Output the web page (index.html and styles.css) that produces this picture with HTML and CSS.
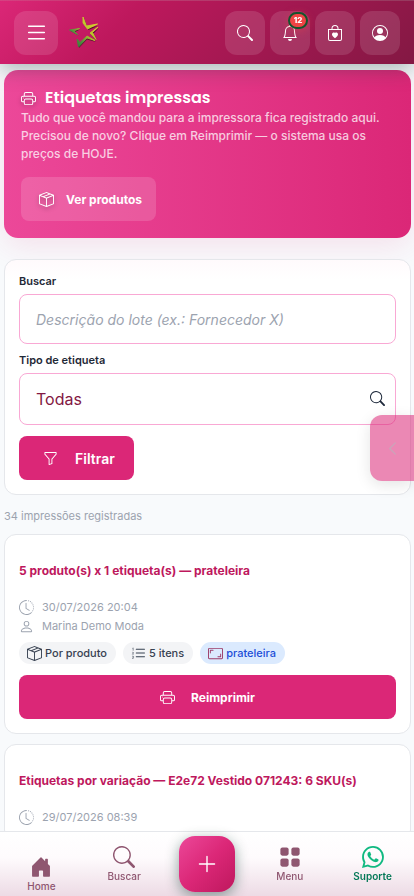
FILE: index.html
```html
<!DOCTYPE html>
<html lang="pt-BR">
<head>
<meta charset="utf-8">
<meta name="viewport" content="width=device-width, initial-scale=1">
<title>Etiquetas impressas</title>
<link rel="stylesheet" href="styles.css">
</head>
<body>
<svg class="sprite" aria-hidden="true">
  <symbol id="list" viewBox="0 0 16 16"><path d="M2.5 12a.5.5 0 0 1 .5-.5h10a.5.5 0 0 1 0 1H3a.5.5 0 0 1-.5-.5zm0-4a.5.5 0 0 1 .5-.5h10a.5.5 0 0 1 0 1H3a.5.5 0 0 1-.5-.5zm0-4a.5.5 0 0 1 .5-.5h10a.5.5 0 0 1 0 1H3a.5.5 0 0 1-.5-.5z"/></symbol>
  <symbol id="search" viewBox="0 0 16 16"><path d="M11.742 10.344a6.5 6.5 0 1 0-1.397 1.398h-.001c.03.04.062.078.098.115l3.85 3.85a1 1 0 0 0 1.415-1.414l-3.85-3.85a1.007 1.007 0 0 0-.115-.1zM12 6.5a5.5 5.5 0 1 1-11 0 5.5 5.5 0 0 1 11 0z"/></symbol>
  <symbol id="bell" viewBox="0 0 16 16"><path d="M8 16a2 2 0 0 0 2-2H6a2 2 0 0 0 2 2zM8 1.918l-.797.161A4.002 4.002 0 0 0 4 6c0 .628-.134 2.197-.459 3.742-.16.767-.376 1.566-.663 2.258h10.244c-.287-.692-.502-1.49-.663-2.258C12.134 8.197 12 6.628 12 6a4.002 4.002 0 0 0-3.203-3.92L8 1.917zM14.22 12c.223.447.481.801.78 1H1c.299-.199.557-.553.78-1C2.68 10.2 3 6.88 3 6c0-2.42 1.72-4.44 4.005-4.901a1 1 0 1 1 1.99 0A5.002 5.002 0 0 1 13 6c0 .88.32 4.2 1.22 6z"/></symbol>
  <symbol id="bag" viewBox="0 0 16 16"><path fill-rule="evenodd" d="M11.5 4v-.5a3.5 3.5 0 1 0-7 0V4H1v10a2 2 0 0 0 2 2h10a2 2 0 0 0 2-2V4h-3.5zM8 1a2.5 2.5 0 0 1 2.5 2.5V4h-5v-.5A2.5 2.5 0 0 1 8 1zM2 5h12v9a1 1 0 0 1-1 1H3a1 1 0 0 1-1-1V5z"/><path d="M8 7.993c1.664-1.711 5.825 1.283 0 5.132-5.825-3.85-1.664-6.843 0-5.132z"/></symbol>
  <symbol id="account" viewBox="0 0 16 16"><path d="M11 6a3 3 0 1 1-6 0 3 3 0 0 1 6 0z"/><path fill-rule="evenodd" d="M0 8a8 8 0 1 1 16 0A8 8 0 0 1 0 8zm8-7a7 7 0 0 0-5.468 11.37C3.242 11.226 4.805 10 8 10s4.757 1.225 5.468 2.37A7 7 0 0 0 8 1z"/></symbol>
  <symbol id="printer" viewBox="0 0 16 16"><path d="M2.5 8a.5.5 0 1 0 0-1 .5.5 0 0 0 0 1z"/><path d="M5 1a2 2 0 0 0-2 2v2H2a2 2 0 0 0-2 2v3a2 2 0 0 0 2 2h1v1a2 2 0 0 0 2 2h6a2 2 0 0 0 2-2v-1h1a2 2 0 0 0 2-2V7a2 2 0 0 0-2-2h-1V3a2 2 0 0 0-2-2H5zM4 3a1 1 0 0 1 1-1h6a1 1 0 0 1 1 1v2H4V3zm1 5a2 2 0 0 0-2 2v1H2a1 1 0 0 1-1-1V7a1 1 0 0 1 1-1h12a1 1 0 0 1 1 1v3a1 1 0 0 1-1 1h-1v-1a2 2 0 0 0-2-2H5zm7 2v3a1 1 0 0 1-1 1H5a1 1 0 0 1-1-1v-3a1 1 0 0 1 1-1h6a1 1 0 0 1 1 1z"/></symbol>
  <symbol id="box" viewBox="0 0 16 16"><path d="M8.186 1.113a.5.5 0 0 0-.372 0L1.846 3.5l2.404.961L10.404 2l-2.218-.887zm3.564 1.426L5.596 5 8 5.961 14.154 3.5l-2.404-.961zm3.25 1.7-6.5 2.6v7.922l6.5-2.6V4.24zM7.5 14.762V6.838L1 4.239v7.923l6.5 2.6zM7.443.184a1.5 1.5 0 0 1 1.114 0l7.129 2.852A.5.5 0 0 1 16 3.5v8.662a1 1 0 0 1-.629.928l-7.185 2.874a.5.5 0 0 1-.372 0L.63 13.09a1 1 0 0 1-.63-.928V3.5a.5.5 0 0 1 .314-.464L7.443.184z"/></symbol>
  <symbol id="funnel" viewBox="0 0 16 16"><path d="M1.5 1.5A.5.5 0 0 1 2 1h12a.5.5 0 0 1 .5.5v2a.5.5 0 0 1-.128.334L10 8.692V13.5a.5.5 0 0 1-.342.474l-3 1A.5.5 0 0 1 6 14.5V8.692L1.628 3.834A.5.5 0 0 1 1.5 3.5v-2zm1 .5v1.308l4.372 4.858A.5.5 0 0 1 7 8.5v5.306l2-.666V8.5a.5.5 0 0 1 .128-.334L13.5 3.308V2h-11z"/></symbol>
  <symbol id="clock" viewBox="0 0 16 16"><path d="M8.515 1.019A7 7 0 0 0 8 1V0a8 8 0 0 1 .589.022l-.074.997zm2.004.45a7.003 7.003 0 0 0-.985-.299l.219-.976c.383.086.76.2 1.126.342l-.36.933zm1.37.71a7.01 7.01 0 0 0-.439-.27l.493-.87a8.025 8.025 0 0 1 .979.654l-.615.789a6.996 6.996 0 0 0-.418-.302zm1.834 1.79a6.99 6.99 0 0 0-.653-.796l.724-.69c.27.285.52.59.747.91l-.818.576zm.744 1.352a7.08 7.08 0 0 0-.214-.468l.893-.45a7.976 7.976 0 0 1 .45 1.088l-.95.313a7.023 7.023 0 0 0-.179-.483zm.53 2.507a6.991 6.991 0 0 0-.1-1.025l.985-.17c.067.386.106.778.116 1.17l-1 .025zm-.131 1.538c.033-.17.06-.339.081-.51l.993.123a7.957 7.957 0 0 1-.23 1.155l-.964-.267c.046-.165.086-.332.12-.501zm-.952 2.379c.184-.29.346-.594.486-.908l.914.405c-.16.36-.345.706-.555 1.038l-.845-.535zm-.964 1.205c.122-.122.239-.248.35-.378l.758.653a8.073 8.073 0 0 1-.401.432l-.707-.707z"/><path d="M8 1a7 7 0 1 0 4.95 11.95l.707.707A8.001 8.001 0 1 1 8 0v1z"/><path d="M7.5 3a.5.5 0 0 1 .5.5v5.21l3.248 1.856a.5.5 0 0 1-.496.868l-3.5-2A.5.5 0 0 1 7 9V3.5a.5.5 0 0 1 .5-.5z"/></symbol>
  <symbol id="person" viewBox="0 0 16 16"><path d="M8 8a3 3 0 1 0 0-6 3 3 0 0 0 0 6Zm2-3a2 2 0 1 1-4 0 2 2 0 0 1 4 0Zm4 8c0 1-1 1-1 1H3s-1 0-1-1 1-4 6-4 6 3 6 4Zm-1-.004c-.001-.246-.154-.986-.832-1.664C11.516 10.68 10.289 10 8 10c-2.29 0-3.516.68-4.168 1.332-.678.678-.83 1.418-.832 1.664h10Z"/></symbol>
  <symbol id="steps" viewBox="0 0 16 16"><path d="M5 11.5a.5.5 0 0 1 .5-.5h9a.5.5 0 0 1 0 1h-9a.5.5 0 0 1-.5-.5zm0-4a.5.5 0 0 1 .5-.5h9a.5.5 0 0 1 0 1h-9a.5.5 0 0 1-.5-.5zm0-4a.5.5 0 0 1 .5-.5h9a.5.5 0 0 1 0 1h-9a.5.5 0 0 1-.5-.5z"/><path fill="none" stroke="currentColor" stroke-width=".6" d="M1.6 2.5 2.3 2v3M1.3 6.9q.9-.8 1.4.1 0 .6-1.3 1.7h1.5M1.3 10.9q1.3-.5 1.4.3-.1.7-.9.7 1 0 1 .8-.1 1-1.6.5"/></symbol>
  <symbol id="ratio" viewBox="0 0 16 16"><path d="M0 3.5A1.5 1.5 0 0 1 1.5 2h13A1.5 1.5 0 0 1 16 3.5v9a1.5 1.5 0 0 1-1.5 1.5h-13A1.5 1.5 0 0 1 0 12.5v-9zM1.5 3a.5.5 0 0 0-.5.5v9a.5.5 0 0 0 .5.5h13a.5.5 0 0 0 .5-.5v-9a.5.5 0 0 0-.5-.5h-13z"/><path d="M2 4.5a.5.5 0 0 1 .5-.5h3a.5.5 0 0 1 0 1H3v2.5a.5.5 0 0 1-1 0v-3zm12 7a.5.5 0 0 1-.5.5h-3a.5.5 0 0 1 0-1H13V8.5a.5.5 0 0 1 1 0v3z"/></symbol>
  <symbol id="house" viewBox="0 0 16 16"><path d="M6.5 14.5v-3.505c0-.245.25-.495.5-.495h2c.25 0 .5.25.5.5v3.5a.5.5 0 0 0 .5.5h4a.5.5 0 0 0 .5-.5v-7a.5.5 0 0 0-.146-.354L13 5.793V2.5a.5.5 0 0 0-.5-.5h-1a.5.5 0 0 0-.5.5v1.293L8.354 1.146a.5.5 0 0 0-.708 0l-6 6A.5.5 0 0 0 1.5 7.5v7a.5.5 0 0 0 .5.5h4a.5.5 0 0 0 .5-.5Z"/></symbol>
  <symbol id="grid" viewBox="0 0 16 16"><rect x="1" y="1" width="6" height="6" rx="1.5"/><rect x="9" y="1" width="6" height="6" rx="1.5"/><rect x="1" y="9" width="6" height="6" rx="1.5"/><rect x="9" y="9" width="6" height="6" rx="1.5"/></symbol>
  <symbol id="plus" viewBox="0 0 16 16"><path d="M8 2a.5.5 0 0 1 .5.5v5h5a.5.5 0 0 1 0 1h-5v5a.5.5 0 0 1-1 0v-5h-5a.5.5 0 0 1 0-1h5v-5A.5.5 0 0 1 8 2z"/></symbol>
  <symbol id="chevron" viewBox="0 0 16 16"><path fill="none" stroke="currentColor" stroke-width="1.3" stroke-linecap="round" stroke-linejoin="round" d="M11 2 5 8l6 6"/></symbol>
  <symbol id="whatsapp" viewBox="0 0 16 16"><path d="M13.601 2.326A7.854 7.854 0 0 0 7.994 0C3.627 0 .068 3.558.064 7.926c0 1.399.366 2.76 1.057 3.965L0 16l4.204-1.102a7.933 7.933 0 0 0 3.79.965h.004c4.368 0 7.926-3.558 7.93-7.93A7.898 7.898 0 0 0 13.6 2.326zM7.994 14.521a6.573 6.573 0 0 1-3.356-.92l-.24-.144-2.494.654.666-2.433-.156-.251a6.56 6.56 0 0 1-1.007-3.505c0-3.626 2.957-6.584 6.591-6.584a6.56 6.56 0 0 1 4.66 1.931 6.557 6.557 0 0 1 1.928 4.66c-.004 3.639-2.961 6.592-6.592 6.592zm3.615-4.934c-.197-.099-1.17-.578-1.353-.646-.182-.065-.315-.099-.445.099-.133.197-.513.646-.627.775-.114.133-.232.148-.43.05-.197-.1-.836-.308-1.592-.985-.59-.525-.985-1.175-1.103-1.372-.114-.198-.011-.304.088-.403.087-.088.197-.232.296-.346.1-.114.133-.198.198-.33.065-.134.034-.248-.015-.347-.05-.099-.445-1.076-.612-1.47-.16-.389-.323-.335-.445-.34-.114-.007-.247-.007-.38-.007a.729.729 0 0 0-.529.247c-.182.198-.691.677-.691 1.654 0 .977.71 1.916.81 2.049.098.133 1.394 2.132 3.383 2.992.47.205.84.326 1.129.418.475.152.904.129 1.246.08.38-.058 1.171-.48 1.338-.943.164-.464.164-.86.114-.943-.049-.084-.182-.133-.38-.232z"/></symbol>
</svg>

<header class="topbar">
  <button class="tool tool-menu" type="button" aria-label="Abrir menu"><svg class="icon icon-lg"><use href="#list"/></svg></button>
  <a class="logo" href="#" aria-label="Início">
    <svg class="logo-mark" viewBox="0 0 32 34">
      <defs><linearGradient id="leaf" x1="1" y1="0" x2="0" y2="1"><stop offset="0" stop-color="#e8dc2a"/><stop offset=".45" stop-color="#b4c52c"/><stop offset=".7" stop-color="#4c8f3e"/><stop offset="1" stop-color="#2b6a35"/></linearGradient></defs>
      <g class="logo-shade"><path d="M15 2 18.5 11.500 29 10 19.500 14 16 9zM30 12 24 18 27 24.500 21.500 18zM27 26 18 23.500 10 32 9 25.500 11.500 28 18.500 21zM1.500 15 11 13.500 6 16 9.500 19.500z"/></g>
      <path fill="url(#leaf)" stroke="url(#leaf)" stroke-width=".9" stroke-linejoin="round" d="M14 1 17.500 10 28.500 8 18.500 13 14 7zM29 11 23.500 16.500 27 23.500 21 17zM26 24.500 18 22 9.500 31 8 23 11 26.500 18 20zM.5 14 10.500 12.500 5 15 8.500 18.500z"/>
    </svg>
  </a>
  <div class="tools">
    <button class="tool" type="button" aria-label="Pesquisar"><svg class="icon icon-md"><use href="#search"/></svg></button>
    <button class="tool" type="button" aria-label="Notificações"><svg class="icon icon-md"><use href="#bell"/></svg><span class="badge">12</span></button>
    <button class="tool" type="button" aria-label="Sacola"><svg class="icon icon-md"><use href="#bag"/></svg></button>
    <button class="tool" type="button" aria-label="Conta"><svg class="icon icon-md"><use href="#account"/></svg></button>
  </div>
</header>

<main class="page">
  <section class="hero">
    <h1 class="hero-title"><svg class="icon icon-shadow"><use href="#printer"/></svg>Etiquetas impressas</h1>
    <p class="hero-text">Tudo que você mandou para a impressora fica registrado aqui. Precisou de novo? Clique em Reimprimir — o sistema usa os preços de HOJE.</p>
    <a class="btn btn-glass" href="#"><svg class="icon icon-shadow"><use href="#box"/></svg>Ver produtos</a>
  </section>

  <form class="card filter">
    <label class="label" for="q">Buscar</label>
    <input class="field" id="q" type="text" placeholder="Descrição do lote (ex.: Fornecedor X)">
    <label class="label" for="kind">Tipo de etiqueta</label>
    <div class="select-wrap">
      <select class="field field-select" id="kind"><option>Todas</option></select>
      <svg class="icon select-icon"><use href="#search"/></svg>
    </div>
    <button class="btn btn-filter" type="button"><svg class="icon"><use href="#funnel"/></svg>Filtrar</button>
  </form>

  <p class="count">34 impressões registradas</p>

  <article class="card batch">
    <h2 class="batch-title">5 produto(s) x 1 etiqueta(s) — prateleira</h2>
    <p class="meta"><svg class="icon"><use href="#clock"/></svg>30/07/2026 20:04</p>
    <p class="meta"><svg class="icon"><use href="#person"/></svg>Marina Demo Moda</p>
    <div class="chips">
      <span class="chip"><svg class="icon"><use href="#box"/></svg>Por produto</span>
      <span class="chip"><svg class="icon"><use href="#steps"/></svg>5 itens</span>
      <span class="chip chip-blue"><svg class="icon"><use href="#ratio"/></svg>prateleira</span>
    </div>
    <button class="btn btn-print" type="button"><svg class="icon"><use href="#printer"/></svg>Reimprimir</button>
  </article>

  <article class="card batch">
    <h2 class="batch-title">Etiquetas por variação — E2e72 Vestido 071243: 6 SKU(s)</h2>
    <p class="meta"><svg class="icon"><use href="#clock"/></svg>29/07/2026 08:39</p>
  </article>
</main>

<button class="drawer" type="button" aria-label="Abrir painel"><svg class="icon"><use href="#chevron"/></svg></button>

<nav class="bottombar">
  <a class="tab tab-home" href="#"><svg class="icon"><use href="#house"/></svg>Home</a>
  <a class="tab" href="#"><svg class="icon"><use href="#search"/></svg>Buscar</a>
  <div class="add-slot"><button class="add" type="button" aria-label="Adicionar"><svg class="icon"><use href="#plus"/></svg></button></div>
  <a class="tab" href="#"><svg class="icon"><use href="#grid"/></svg>Menu</a>
  <a class="tab tab-help" href="#"><svg class="icon"><use href="#whatsapp"/></svg>Suporte</a>
</nav>
</body>
</html>
```
FILE: styles.css
```css
* { box-sizing: border-box; }

body {
  margin: 0;
  background: #f8fafc;
  color: #1e293b;
  font-family: Inter, "Liberation Sans", sans-serif;
  font-size: 14px;
}

h1, h2, p { margin: 0; }
a { text-decoration: none; color: inherit; }
button, input, select { font-family: inherit; }
button { border: 0; cursor: pointer; }

.sprite { display: block; width: 0; height: 0; position: absolute; }
.icon { width: 15px; height: 15px; fill: currentColor; flex: none; }
.icon-md { width: 16px; height: 16px; }
.icon-lg { width: 25px; height: 25px; }
.icon-shadow { filter: drop-shadow(0 2px 2px rgba(0, 0, 0, .3)); }

.topbar {
  position: fixed;
  z-index: 2;
  top: 0;
  left: 0;
  right: 0;
  height: 64px;
  padding: 0 14px;
  display: flex;
  align-items: center;
  background: linear-gradient(135deg, #db2777 0%, #be185d 30%, #831843 100%);
  border-top: 1px solid rgba(255, 255, 255, .15);
  box-shadow: 0 4px 20px rgba(6, 60, 45, .35);
}
.tool {
  position: relative;
  width: 40px;
  height: 44px;
  padding: 0;
  display: grid;
  place-items: center;
  border-radius: 12px;
  color: #fff;
  background: rgba(255, 255, 255, .12);
}
.tool-menu { width: 44px; }
.logo { margin-left: 11px; }
.logo-mark { display: block; width: 32px; height: 34px; }
.logo-shade { fill: rgba(50, 20, 30, .75); }
.tools { margin-left: auto; display: flex; gap: 5px; }
.badge {
  position: absolute;
  top: 1px;
  right: 2px;
  width: 20px;
  height: 17px;
  border: 2px solid #14532d;
  border-radius: 9px;
  background: #ef4444;
  font-size: 8px;
  font-weight: 800;
  line-height: 13px;
  text-align: center;
  box-shadow: 0 2px 8px rgba(239, 68, 68, .4);
}

.page { padding: 70px 3px 0 4px; }

.hero {
  padding: 17px;
  margin-bottom: 21px;
  border-radius: 14px;
  color: #fff;
  background: linear-gradient(90deg, #ec4899, #db2777);
  box-shadow: 0 8px 30px rgba(219, 39, 119, .12);
}
.hero-title {
  display: flex;
  align-items: center;
  gap: 9px;
  font-family: Poppins, Inter, sans-serif;
  font-size: 16px;
  font-weight: 600;
  line-height: 22px;
}
.hero-text {
  margin-bottom: 14px;
  font-size: 12px;
  line-height: 18px;
  font-weight: 500;
  color: rgba(255, 255, 255, .75);
}

.btn {
  display: inline-flex;
  align-items: center;
  justify-content: center;
  height: 44px;
  border-radius: 8px;
  color: #fff;
  background: #db2777;
  font-size: 12px;
  font-weight: 700;
}
.btn-glass { gap: 12px; padding: 0 14px 0 18px; background: rgba(255, 255, 255, .15); }
.btn-filter { align-self: flex-start; gap: 17px; padding: 0 19px 0 24px; font-size: 14px; font-weight: 600; }
.btn-print { width: 100%; gap: 16px; }

.card {
  border: 1px solid #e5e7eb;
  border-radius: 12px;
  background: #fff;
}
.filter {
  display: flex;
  flex-direction: column;
  padding: 14px;
  background: linear-gradient(180deg, #fffafc, #fff 20px);
}
.label {
  margin-bottom: 6px;
  color: #1f2937;
  font-size: 11px;
  font-weight: 600;
  line-height: 14px;
}
.field {
  width: 100%;
  height: 50px;
  margin-bottom: 9px;
  padding: 0 16px;
  border: 1px solid #f9a8d4;
  border-radius: 8px;
  background: #fff;
  color: #831843;
  font-size: 14px;
}
.field::placeholder { color: #9ca3af; font-style: italic; opacity: 1; }
.select-wrap { position: relative; margin-bottom: 11px; }
.field-select { display: block; appearance: none; height: 52px; margin: 0; font-size: 16px; }
.select-icon { position: absolute; right: 11px; top: 18px; pointer-events: none; }

.count { padding: 12px 0 9px; color: #9ca3af; font-size: 11px; line-height: 18px; }

.batch { padding: 27px 14px 14px; margin-bottom: 10px; }
.batch-title {
  margin-bottom: 18px;
  color: #be185d;
  font-size: 12px;
  font-weight: 700;
  line-height: 18px;
}
.meta {
  display: flex;
  align-items: center;
  gap: 8px;
  color: #9ca3af;
  font-size: 11px;
  line-height: 19px;
}
.chips { display: flex; gap: 7px; margin: 6px 0 11px; }
.chip {
  display: flex;
  align-items: center;
  gap: 3px;
  height: 22px;
  padding: 0 9px 0 8px;
  border-radius: 11px;
  background: #f3f4f6;
  color: #374151;
  font-size: 11px;
  font-weight: 500;
}
.chip-blue { background: #dbeafe; color: #1d4ed8; }
.chip-blue .icon { color: #9d3c68; }

.drawer {
  position: fixed;
  z-index: 1;
  right: 0;
  top: 415px;
  width: 44px;
  height: 66px;
  padding: 0;
  display: grid;
  place-items: center;
  border-radius: 12px 0 0 12px;
  color: #9d5c80;
  background: #db2777;
  opacity: .55;
  box-shadow: 0 4px 16px rgba(0, 0, 0, .2);
}

.bottombar {
  position: fixed;
  z-index: 2;
  left: 0;
  right: 0;
  bottom: 0;
  height: 65px;
  display: flex;
  align-items: flex-start;
  padding-top: 4px;
  border-top: 1px solid #e5e7eb;
  background: linear-gradient(180deg, #fff 0%, #fefbfd 40%, #eddbe5 100%);
}
.tab {
  flex: 1 1 0;
  display: flex;
  flex-direction: column;
  align-items: center;
  gap: 1px;
  padding-top: 10px;
  color: #8f5670;
  font-size: 10px;
  font-weight: 500;
  line-height: 14px;
}
.tab .icon { width: 22px; height: 22px; }
.tab-home { padding-top: 20px; }
.tab-help { color: #047857; font-weight: 600; }
.tab-help .icon { color: #10b981; }
.add-slot { flex: 1 1 0; display: flex; justify-content: center; }
.add {
  width: 56px;
  height: 56px;
  padding: 0;
  display: grid;
  place-items: center;
  border-radius: 16px;
  color: #fff;
  background: linear-gradient(135deg, #ec4899, #db2777 50%, #be185d);
  box-shadow: 0 4px 14px rgba(6, 60, 45, .45);
}
.add .icon { width: 22px; height: 22px; }
```
